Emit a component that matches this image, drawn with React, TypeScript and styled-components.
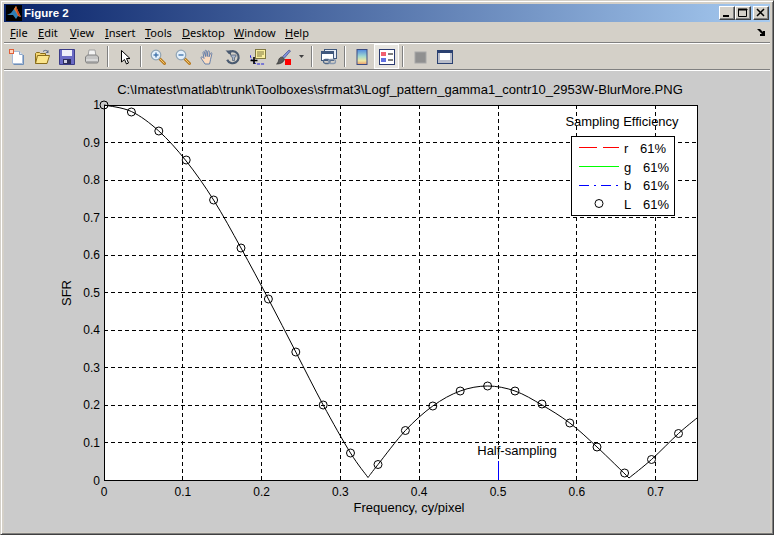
import React from 'react';
import styled, {createGlobalStyle} from 'styled-components';

const GlobalStyle = createGlobalStyle`
    html, body {
        margin: 0;
        padding: 0;
        background: #d4d0c8;
    }
`;

const Window = styled.div`
    box-sizing: border-box;
    width: 774px;
    height: 535px;
    display: flex;
    flex-direction: column;
    padding: 3px 3px 2px 3px;
    background: #d4d0c8;
    border: 1px solid;
    border-color: #d4d0c8 #404040 #404040 #d4d0c8;
    box-shadow: inset 1px 1px 0 #ffffff, inset -1px -1px 0 #808080;
    font-family: "Liberation Sans", Arial, sans-serif;
`;

const TitleBar = styled.div`
    height: 18px;
    flex: none;
    display: flex;
    align-items: center;
    padding: 0 1px 0 2px;
    background: linear-gradient(90deg, #0a246a 0%, #a6caf0 100%);
`;

const TitleText = styled.span`
    margin-left: 2px;
    color: #ffffff;
    font: bold 11.5px "Liberation Sans", Arial, sans-serif;
`;

const CaptionButtons = styled.div`
    margin-left: auto;
    display: flex;
`;

const CaptionButton = styled.button<{$gap?: boolean}>`
    box-sizing: border-box;
    width: 16px;
    height: 14px;
    padding: 0;
    margin-left: ${p => (p.$gap ? '2px' : '0')};
    display: flex;
    align-items: center;
    justify-content: center;
    background: #d4d0c8;
    border: 1px solid;
    border-color: #ffffff #404040 #404040 #ffffff;
    box-shadow: inset -1px -1px 0 #808080;
`;

const MenuBar = styled.div`
    height: 20px;
    flex: none;
    display: flex;
    align-items: center;
    padding-left: 6px;
    font: 11px "Noto Sans", "Liberation Sans", sans-serif;
    color: #000000;
    border-bottom: 1px solid #808080;
`;

const MenuItem = styled.span<{$width: number}>`
    width: ${p => p.$width}px;
    flex: none;
`;

const MenuArrow = styled.span`
    margin-left: auto;
    margin-right: 5px;
    display: flex;
`;

const ToolBar = styled.div`
    height: 25px;
    flex: none;
    display: flex;
    align-items: center;
    border-top: 1px solid #ffffff;
    border-bottom: 1px solid #808080;
`;

const ToolButton = styled.div<{$active?: boolean}>`
    box-sizing: border-box;
    width: 25px;
    height: 25px;
    flex: none;
    display: flex;
    align-items: center;
    justify-content: center;
    ${p => p.$active && `
        background: #e8e6e1;
        border: 1px solid #ffffff;
    `}
`;

const ToolDrop = styled.div`
    width: 13px;
    flex: none;
    display: flex;
    justify-content: center;
`;

const ToolSeparator = styled.div`
    width: 2px;
    height: 21px;
    flex: none;
    margin: 0 3px;
    background: linear-gradient(90deg, #808080 50%, #ffffff 50%);
`;

const Canvas = styled.div`
    flex: 1;
    min-height: 0;
    background: #cbcbcb;
    border-top: 1px solid #ffffff;
`;

const PlotSvg = styled.svg`
    display: block;
    width: 100%;
    height: 100%;
    font-family: "Liberation Sans", Arial, sans-serif;
    font-size: 13px;
    fill: #000000;
`;

const TickText = styled.text`
    font-size: 12px;
`;

const Icon = styled.svg`
    display: block;
    width: 16px;
    height: 16px;
    flex: none;
`;

type Pt = [number, number];

// hand-read from the picture, in page pixels; the curve is cut at its two zeros
const pieces: Pt[][] = [
    [[104, 105], [131.4, 111.5], [158.8, 131], [186.2, 161], [213.6, 200], [241, 248], [268.4, 299], [295.8, 352], [323.2, 405], [350.5, 453], [368, 477.5]],
    [[368, 477.5], [378, 464.5], [405.4, 430.5], [432.8, 406], [460.2, 391], [487.6, 386], [515, 391], [542, 405], [569.8, 423], [597, 447], [629, 478]],
    [[629, 478], [651.5, 459.5], [678.5, 433.5], [697, 418]],
];

const markers: Pt[] = [
    [104, 105], [131.4, 112], [158.8, 131], [186.2, 160], [213.6, 200], [241, 248], [268.4, 299], [295.8, 352], [323.2, 405], [350.5, 453],
    [378, 464.5], [405.4, 430.5], [432.8, 406], [460.2, 391], [487.6, 386], [515, 391], [542, 404], [569.8, 423], [597, 447], [624.6, 473], [651.5, 459.5], [678.5, 433.5],
];

const spline = (pts: Pt[]) => {
    let d = `M${pts[0][0]} ${pts[0][1]}`;
    for (let i = 0; i < pts.length - 1; i++) {
        const p0 = pts[Math.max(i - 1, 0)];
        const p1 = pts[i];
        const p2 = pts[i + 1];
        const p3 = pts[Math.min(i + 2, pts.length - 1)];
        const c1 = [p1[0] + ((p2[0] - p0[0]) / 6), p1[1] + ((p2[1] - p0[1]) / 6)];
        const c2 = [p2[0] - ((p3[0] - p1[0]) / 6), p2[1] - ((p3[1] - p1[1]) / 6)];
        d += `C${c1[0].toFixed(1)} ${c1[1].toFixed(1)} ${c2[0].toFixed(1)} ${c2[1].toFixed(1)} ${p2[0]} ${p2[1]}`;
    }
    return d;
};

const xTicks = [0, 1, 2, 3, 4, 5, 6, 7];
const yTicks = [0, 1, 2, 3, 4, 5, 6, 7, 8, 9, 10];
const xAt = (i: number) => 104 + (i * 78.8);
const yAt = (i: number) => 480 - (i * 37.5);
const tickLabel = (i: number) => {
    if (i === 0) {
        return '0';
    }
    return i === 10 ? '1' : `0.${i}`;
};

const legendRows = [
    {name: 'r', x: 640, y: 153},
    {name: 'g', x: 643, y: 172},
    {name: 'b', x: 643, y: 190},
    {name: 'L', x: 643, y: 209},
];

const Plot = () => (
    <PlotSvg viewBox='4 71 766 461' preserveAspectRatio='none'>
        <rect x={104} y={105} width={593} height={375} fill='#ffffff'/>
        <g stroke='#000000' strokeWidth={1} strokeDasharray='4 3' shapeRendering='crispEdges'>
            {xTicks.slice(1).map(i => (
                <line key={i} x1={xAt(i)} x2={xAt(i)} y1={480} y2={105}/>
            ))}
            {yTicks.slice(1, 10).map(i => (
                <line key={i} x1={104} x2={697} y1={yAt(i)} y2={yAt(i)}/>
            ))}
        </g>
        <rect x={104} y={105} width={593} height={375} fill='none' stroke='#000000' strokeWidth={1} shapeRendering='crispEdges'/>
        <line x1={498} x2={498} y1={461} y2={480} stroke='#0000ff' strokeWidth={1} shapeRendering='crispEdges'/>
        {pieces.map((p, i) => (
            <path key={i} d={spline(p)} fill='none' stroke='#000000' strokeWidth={1}/>
        ))}
        {markers.map(([x, y]) => (
            <circle key={x} cx={x} cy={y} r={4} fill='none' stroke='#000000' strokeWidth={1}/>
        ))}

        <text x={400} y={94} textAnchor='middle'>{'C:\\Imatest\\matlab\\trunk\\Toolboxes\\sfrmat3\\Logf_pattern_gamma1_contr10_2953W-BlurMore.PNG'}</text>
        {yTicks.map(i => (
            <TickText key={i} x={100} y={yAt(i) + (i === 0 ? 5 : 4)} textAnchor='end'>{tickLabel(i)}</TickText>
        ))}
        {xTicks.map(i => (
            <TickText key={i} x={xAt(i)} y={496} textAnchor='middle'>{tickLabel(i)}</TickText>
        ))}
        <text x={409} y={512} textAnchor='middle'>{'Frequency, cy/pixel'}</text>
        <text transform='translate(71 293) rotate(-90)' textAnchor='middle'>{'SFR'}</text>
        <text x={622} y={126} textAnchor='middle'>{'Sampling Efficiency'}</text>
        <text x={517} y={455} textAnchor='middle'>{'Half-sampling'}</text>

        <rect x={571} y={136} width={103} height={79} fill='#ffffff' stroke='#000000' strokeWidth={1} shapeRendering='crispEdges'/>
        <g fill='none' strokeWidth={1}>
            <path d='M579 147.5h18M603 147.5h16' stroke='#ff0000'/>
            <path d='M579 166.500h40' stroke='#00ff00'/>
            <path d='M579 185.500h10M594 185.500h2M601 185.500h10M616 185.500h2' stroke='#0000ff'/>
        </g>
        <circle cx={599} cy={203.5} r={4} fill='none' stroke='#000000' strokeWidth={1}/>
        {legendRows.map(r => (
            <g key={r.name}>
                <text x={624} y={r.y}>{r.name}</text>
                <text x={r.x} y={r.y}>{'61%'}</text>
            </g>
        ))}
    </PlotSvg>
);

const MatlabLogo = () => (
    <Icon viewBox='0 0 16 16'>
        <rect width={16} height={16} fill='#000000'/>
        <path d='M1 10l4-2 3-4 2-3 2 5 3 6-3-1-2 3-3-4-3 0z' fill='#2f7fb5'/>
        <path d='M8 4l2-3 2 5 3 6-3-1-2-4z' fill='#e8792b'/>
        <path d='M10 1l2 5 3 6-3-2-2-6z' fill='#c8401a'/>
    </Icon>
);

const NewIcon = () => (
    <Icon viewBox='0 0 16 16'>
        <path d='M3.5 2.5h7l3 3v9h-10z' fill='#ffffff' stroke='#a8bcd8'/>
        <path d='M10.5 2.5v3h3' fill='#dfe8f4' stroke='#8ca6c8'/>
        <path d='M14.5 6v9.5h-10' fill='none' stroke='#6f8fb8'/>
        <rect x={0.5} y={0.5} width={4} height={4} fill='#ffd8c0' stroke='#e0603a'/>
    </Icon>
);

const OpenIcon = () => (
    <Icon viewBox='0 0 16 16'>
        <path d='M1.5 14.5v-10l1-1h3l1 1h5v2' fill='#f5d670' stroke='#8a6d1a'/>
        <path d='M1.5 14.5l2-8h12l-2.5 8z' fill='#fbe58c' stroke='#8a6d1a'/>
        <path d='M9 2.5c1.5-1.5 3.5-1.5 5 0' fill='none' stroke='#5a6a8a'/>
        <path d='M14.5 1v3h-3z' fill='#5a6a8a'/>
    </Icon>
);

const SaveIcon = () => (
    <Icon viewBox='0 0 16 16'>
        <path d='M0.5 0.5h15v15h-15z' fill='#6a6ac4' stroke='#3c3c88'/>
        <rect x={3} y={1} width={10} height={6} fill='#eeeef8'/>
        <rect x={4} y={10} width={8} height={5} fill='#2c2c58'/>
        <rect x={5} y={11} width={3} height={3} fill='#d0d0e4'/>
    </Icon>
);

const PrintIcon = () => (
    <Icon viewBox='0 0 16 16'>
        <path d='M5 1h6l1 6h-8z' fill='#f4f4f4' stroke='#a0a0a0'/>
        <path d='M1.5 8l2-2h9l2 2v4l-1 2h-11l-1-2z' fill='#c4c4c4' stroke='#808080'/>
        <path d='M2 11h12' stroke='#eeeeee'/>
        <path d='M3 13h10' stroke='#949494'/>
    </Icon>
);

const ArrowIcon = () => (
    <Icon viewBox='0 0 16 16'>
        <path d='M4.5 1.5v11.5l3-2.5 2 4.5 2-1-2-4.5h3.5z' fill='#ffffff' stroke='#000000'/>
    </Icon>
);

const LensIcon = ({plus}: {plus: boolean}) => (
    <Icon viewBox='0 0 16 16'>
        <path d='M9.5 9.5l5 5' stroke='#b87a20' strokeWidth={3} strokeLinecap='round'/>
        <path d='M10 10l4.5 4.5' stroke='#f4cc70' strokeWidth={1}/>
        <circle cx={6} cy={6} r={4.8} fill='#e4f0fb' stroke='#90a4b4' strokeWidth={1.2}/>
        <path d='M3.5 6h5' stroke='#3a6ea8' strokeWidth={1.3}/>
        {plus && <path d='M6 3.5v5' stroke='#3a6ea8' strokeWidth={1.3}/>}
    </Icon>
);

const HandIcon = () => (
    <Icon viewBox='0 0 16 16'>
        <path d='M5 15c-1-2-3-4-4-6-.5-1 1-1.5 2-.5l1 1-1-6c0-1 1.3-1 1.5 0l1 4-.5-5.5c0-1 1.5-1 1.6 0l.6 5.5.6-5c.1-1 1.5-.9 1.5.1l-.3 5.2 1.5-3.5c.4-.9 1.6-.5 1.4.4l-1.4 6c-.3 1.5-.5 2.8-1 4.300z' fill='#fcdcc0' stroke='#5a78a8' strokeWidth={0.9}/>
    </Icon>
);

const RotateIcon = () => (
    <Icon viewBox='0 0 16 16'>
        <path d='M3.2 4.2a6 6 0 1 1-1 6.5' fill='none' stroke='#4a5a70' strokeWidth={2.2}/>
        <path d='M0.5 1.5h5.5v5z' fill='#4a5a70'/>
        <path d='M6 6h5v1.5l-1.5 1v3h-2v-3l-1.5-1z' fill='#a8b4c8' stroke='#4a5a70' strokeWidth={0.7}/>
    </Icon>
);

const CursorIcon = () => (
    <Icon viewBox='0 0 16 16'>
        <rect x={5.5} y={0.5} width={10} height={9} fill='#fbf0a0' stroke='#807840'/>
        <path d='M7 3h7M7 5h7M7 7h5' stroke='#807840'/>
        <path d='M0 6c1 4 3 8 7 9h8' fill='none' stroke='#2020e0' strokeDasharray='3 1'/>
        <path d='M4 8v7M0.5 11.5h7' stroke='#000000' strokeWidth={1.6}/>
    </Icon>
);

const BrushIcon = () => (
    <Icon viewBox='0 0 16 16'>
        <path d='M14 1l1.5 1-6 7-2-1.5z' fill='#8090d8' stroke='#40508c' strokeWidth={0.7}/>
        <path d='M7 8l2.5 2c-.5 3-3.5 5-8 5 2-1 1.5-3 2.5-5 .7-1.3 2-2 3-2z' fill='#5a5a5a' stroke='#303030' strokeWidth={0.7}/>
        <rect x={10} y={10} width={6} height={6} fill='#ff0000'/>
    </Icon>
);

const LinkIcon = () => (
    <Icon viewBox='0 0 16 16'>
        <rect x={3.5} y={0.5} width={12} height={9} fill='#e8eef8' stroke='#40587c'/>
        <rect x={0.5} y={2.5} width={12} height={9} fill='#ffffff' stroke='#40587c'/>
        <rect x={1} y={3} width={11} height={2} fill='#40587c'/>
        <rect x={2.5} y={10.5} width={6.5} height={4} rx={2} fill='none' stroke='#506888' strokeWidth={1.3}/>
        <rect x={7.5} y={10.5} width={7} height={4} rx={2} fill='none' stroke='#8a9ab0' strokeWidth={1.3}/>
    </Icon>
);

const ColorbarIcon = () => (
    <Icon viewBox='0 0 16 16'>
        <defs>
            <linearGradient id='cb' x1='0' x2='0' y1='0' y2='1'>
                <stop offset='0' stopColor='#5088e0'/>
                <stop offset='0.45' stopColor='#a0d8d0'/>
                <stop offset='0.75' stopColor='#f0e8a0'/>
                <stop offset='1' stopColor='#e89868'/>
            </linearGradient>
        </defs>
        <rect x={3} y={0.5} width={10} height={15} fill='url(#cb)' stroke='#3a4a80'/>
    </Icon>
);

const LegendIcon = () => (
    <Icon viewBox='0 0 16 16'>
        <rect x={0.5} y={0.5} width={15} height={15} fill='#ffffff' stroke='#2a3a70'/>
        <rect x={2} y={3} width={5} height={4} fill='#f06070'/>
        <rect x={2} y={9} width={5} height={4} fill='#6070e0'/>
        <path d='M9 5h5M9 11h5' stroke='#000000'/>
    </Icon>
);

const HideIcon = () => (
    <Icon viewBox='0 0 16 16'>
        <rect x={3} y={3} width={11} height={11} fill='#909090' stroke='#a8a8a8'/>
    </Icon>
);

const ToolsIcon = () => (
    <Icon viewBox='0 0 16 16'>
        <rect x={0.5} y={1.5} width={15} height={13} fill='#b8bcc8' stroke='#2a4070'/>
        <rect x={1} y={2} width={14} height={2} fill='#2a4070'/>
        <rect x={3} y={4} width={10} height={7} fill='#ffffff'/>
    </Icon>
);

const menus = [
    {label: 'File', width: 28},
    {label: 'Edit', width: 32},
    {label: 'View', width: 35},
    {label: 'Insert', width: 40},
    {label: 'Tools', width: 37},
    {label: 'Desktop', width: 52},
    {label: 'Window', width: 51},
    {label: 'Help', width: 30},
];

const App = () => (
    <>
        <GlobalStyle/>
        <Window>
            <TitleBar>
                <MatlabLogo/>
                <TitleText>{'Figure 2'}</TitleText>
                <CaptionButtons>
                    <CaptionButton aria-label='minimize'>
                        <svg width='10' height='10' viewBox='0 0 10 10'><rect x='1' y='7' width='6' height='2'/></svg>
                    </CaptionButton>
                    <CaptionButton aria-label='maximize'>
                        <svg width='10' height='10' viewBox='0 0 10 10'><path d='M0.5 1.5h8v7h-8zM0 1h9v1h-9z' fill='none' stroke='#000'/></svg>
                    </CaptionButton>
                    <CaptionButton $gap={true} aria-label='close'>
                        <svg width='10' height='10' viewBox='0 0 10 10'><path d='M1 1l7 7M8 1l-7 7' stroke='#000' strokeWidth='1.5'/></svg>
                    </CaptionButton>
                </CaptionButtons>
            </TitleBar>
            <MenuBar>
                {menus.map(m => (
                    <MenuItem key={m.label} $width={m.width}>
                        <u>{m.label[0]}</u>{m.label.slice(1)}
                    </MenuItem>
                ))}
                <MenuArrow>
                    <svg width='8' height='7' viewBox='0 0 8 7'><path d='M0 0h3l3 3v-1h2v5h-5v-2h2l-3-3z' fill='#000'/></svg>
                </MenuArrow>
            </MenuBar>
            <ToolBar>
                <ToolButton><NewIcon/></ToolButton>
                <ToolButton><OpenIcon/></ToolButton>
                <ToolButton><SaveIcon/></ToolButton>
                <ToolButton><PrintIcon/></ToolButton>
                <ToolSeparator/>
                <ToolButton><ArrowIcon/></ToolButton>
                <ToolSeparator/>
                <ToolButton><LensIcon plus={true}/></ToolButton>
                <ToolButton><LensIcon plus={false}/></ToolButton>
                <ToolButton><HandIcon/></ToolButton>
                <ToolButton><RotateIcon/></ToolButton>
                <ToolButton><CursorIcon/></ToolButton>
                <ToolButton><BrushIcon/></ToolButton>
                <ToolDrop>
                    <svg width='5' height='3' viewBox='0 0 5 3'><path d='M0 0h5l-2.5 3z' fill='#404040'/></svg>
                </ToolDrop>
                <ToolSeparator/>
                <ToolButton><LinkIcon/></ToolButton>
                <ToolSeparator/>
                <ToolButton><ColorbarIcon/></ToolButton>
                <ToolButton $active={true}><LegendIcon/></ToolButton>
                <ToolSeparator/>
                <ToolButton><HideIcon/></ToolButton>
                <ToolButton><ToolsIcon/></ToolButton>
            </ToolBar>
            <Canvas>
                <Plot/>
            </Canvas>
        </Window>
    </>
);

export default App;
